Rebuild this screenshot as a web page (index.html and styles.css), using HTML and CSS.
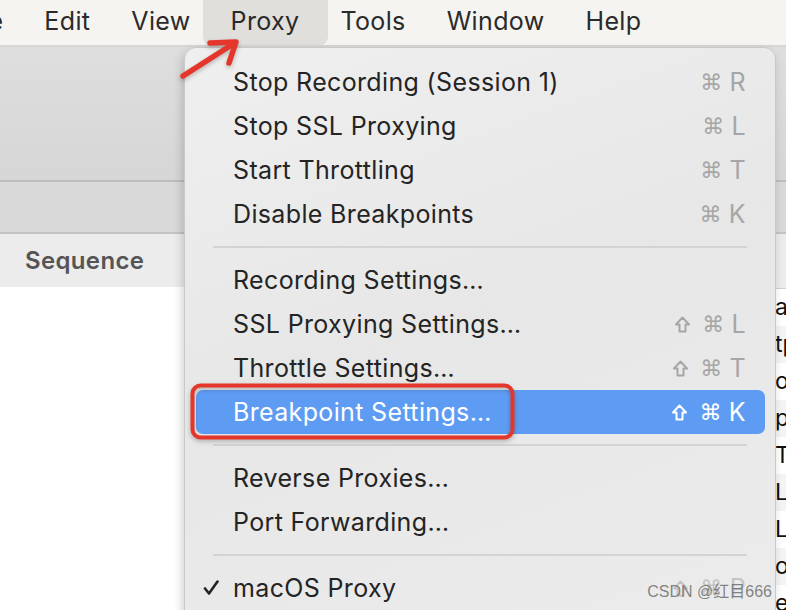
FILE: index.html
```html
<!DOCTYPE html>
<html lang="en">
<head>
  <meta charset="UTF-8" />
  <meta name="viewport" content="width=device-width, initial-scale=1.0"/>
  <title>Proxy Menu</title>
  <link rel="stylesheet" href="styles.css">
</head>
<body>
  <div class="screen">
    <nav class="menubar">
      <span class="menu-title">File</span>
      <span class="menu-title">Edit</span>
      <span class="menu-title">View</span>
      <span class="menu-title active">Proxy</span>
      <span class="menu-title">Tools</span>
      <span class="menu-title">Window</span>
      <span class="menu-title">Help</span>
    </nav>

    <div class="window">
      <div class="toolbar"></div>
      <div class="tabbar"></div>
      <div class="content">
        <div class="seq-pane">
          <div class="pane-header">Sequence</div>
        </div>
        <div class="detail-pane">
          <div class="detail-header"></div>
          <div class="detail-row">al</div>
          <div class="detail-row">tp</div>
          <div class="detail-row">or</div>
          <div class="detail-row">pc</div>
          <div class="detail-row">T</div>
          <div class="detail-row">LS</div>
          <div class="detail-row">LS</div>
          <div class="detail-row">o</div>
          <div class="detail-row">e</div>
        </div>
      </div>
    </div>

    <div class="dropdown">
      <div class="item"><span class="check"></span><span class="label">Stop Recording (Session 1)</span><span class="keys"><span class="cmd">⌘</span>R</span></div>
      <div class="item"><span class="check"></span><span class="label">Stop SSL Proxying</span><span class="keys"><span class="cmd">⌘</span>L</span></div>
      <div class="item"><span class="check"></span><span class="label">Start Throttling</span><span class="keys"><span class="cmd">⌘</span>T</span></div>
      <div class="item"><span class="check"></span><span class="label">Disable Breakpoints</span><span class="keys"><span class="cmd">⌘</span>K</span></div>
      <div class="separator"></div>
      <div class="item"><span class="check"></span><span class="label">Recording Settings…</span></div>
      <div class="item"><span class="check"></span><span class="label">SSL Proxying Settings…</span><span class="keys"><svg class="shift" width="15" height="17" viewBox="0 0 15 17"><path d="M7.5 1.5 L14 8.5 H10.5 V15.5 H4.5 V8.5 H1 Z" fill="none" stroke="currentColor" stroke-width="2" stroke-linejoin="round"/></svg><span class="cmd">⌘</span>L</span></div>
      <div class="item"><span class="check"></span><span class="label">Throttle Settings…</span><span class="keys"><svg class="shift" width="15" height="17" viewBox="0 0 15 17"><path d="M7.5 1.5 L14 8.5 H10.5 V15.5 H4.5 V8.5 H1 Z" fill="none" stroke="currentColor" stroke-width="2" stroke-linejoin="round"/></svg><span class="cmd">⌘</span>T</span></div>
      <div class="item selected"><span class="check"></span><span class="label">Breakpoint Settings…</span><span class="keys"><svg class="shift" width="15" height="17" viewBox="0 0 15 17"><path d="M7.5 1.5 L14 8.5 H10.5 V15.5 H4.5 V8.5 H1 Z" fill="none" stroke="currentColor" stroke-width="2" stroke-linejoin="round"/></svg><span class="cmd">⌘</span>K</span></div>
      <div class="separator"></div>
      <div class="item"><span class="check"></span><span class="label">Reverse Proxies…</span></div>
      <div class="item"><span class="check"></span><span class="label">Port Forwarding…</span></div>
      <div class="separator"></div>
      <div class="item"><span class="check"><svg width="16" height="16" viewBox="0 0 16 16"><path d="M2 8.5 L6 13.5 L14.5 1.5" fill="none" stroke="currentColor" stroke-width="2.6" stroke-linecap="round" stroke-linejoin="round"/></svg></span><span class="label">macOS Proxy</span><span class="keys faded"><svg class="shift" width="15" height="17" viewBox="0 0 15 17"><path d="M7.5 1.5 L14 8.5 H10.5 V15.5 H4.5 V8.5 H1 Z" fill="none" stroke="currentColor" stroke-width="2" stroke-linejoin="round"/></svg><span class="cmd">⌘</span>P</span></div>
    </div>

    <svg class="annotations" width="786" height="610" viewBox="0 0 786 610">
      <g fill="none" stroke="#e5362b" stroke-linecap="round" stroke-linejoin="round">
        <path d="M183 76 L233 44" stroke-width="5.5"/>
        <path d="M210 43 L236 42 L229 63" stroke-width="5.5"/>
        <rect x="192.5" y="385.5" width="320" height="52" rx="8" stroke-width="4"/>
      </g>
    </svg>

    <div class="watermark">CSDN @红目666</div>
  </div>
</body>
</html>
```

FILE: styles.css
```css
body {
  margin: 0;
  font-family: Inter, "Noto Sans", "DejaVu Sans", sans-serif;
  letter-spacing: 0.35px;
  background: #fff;
}
.screen {
  position: relative;
  width: 786px;
  height: 610px;
  overflow: hidden;
}

/* menu bar */
.menubar {
  display: flex;
  height: 45px;
  margin-left: -60px;
  background: #f6f4f1;
  border-bottom: 2px solid #d8d6d3;
  font-size: 25px;
  color: #2a2a2a;
}
.menu-title {
  padding: 0 20.5px;
  line-height: 42px;
  white-space: nowrap;
}
.menu-title.active {
  padding: 0 29px 0 28px;
  margin: 0 -8.5px;
  background: #e1dfdc;
  border-radius: 0 0 8px 8px;
}

/* app window behind the menu */
.window {
  display: flex;
  flex-direction: column;
}
.toolbar {
  height: 133px;
  background: linear-gradient(#dedede, #d6d6d6);
  border-bottom: 2px solid #bdbdbd;
}
.tabbar {
  height: 50px;
  background: #d9d9d9;
  border-bottom: 2px solid #c4c4c4;
}
.content {
  display: flex;
}
.seq-pane {
  width: 740px;
  flex-shrink: 0;
}
.pane-header {
  height: 53px;
  padding-left: 25px;
  line-height: 53px;
  background: #ececec;
  font-size: 24px;
  font-weight: 600;
  color: #555;
}
.detail-pane {
  flex: 1;
}
.detail-header {
  height: 54px;
  background: #ebebeb;
  border-bottom: 1px solid #d0d0d0;
}
.detail-row {
  height: 37px;
  line-height: 37px;
  padding-left: 35px;
  font-size: 23px;
  letter-spacing: 0;
  color: #111;
  white-space: nowrap;
}
.detail-row:nth-child(odd) {
  background: #f4f4f4;
}

/* dropdown */
.dropdown {
  position: absolute;
  left: 184px;
  top: 47px;
  width: 592px;
  height: 600px;
  box-sizing: border-box;
  padding-top: 12px;
  background: linear-gradient(160deg, #efefef, #e7e7e7 45%, #ececec);
  border: 1px solid #c9c9c9;
  border-radius: 12px;
  box-shadow: -2px 4px 10px rgba(0, 0, 0, 0.18);
  font-size: 25px;
  color: #242424;
}
.item {
  display: flex;
  align-items: center;
  height: 44px;
  margin: 0 10px 0 11px;
  padding: 0 19px 0 7px;
  border-radius: 7px;
  white-space: nowrap;
}
.check {
  display: flex;
  align-items: center;
  width: 30px;
  flex-shrink: 0;
}
.keys {
  margin-left: auto;
  display: flex;
  align-items: center;
  color: #a6a6a6;
}
.keys.faded {
  color: #c4c4c4;
}
.cmd {
  font-family: "DejaVu Sans", sans-serif;
  font-size: 22px;
  margin-right: 7px;
}
.shift {
  margin-right: 12px;
}
.item.selected {
  background: #5e9cf3;
  color: #fff;
}
.item.selected .keys {
  color: #fff;
}
.separator {
  height: 2px;
  margin: 10px 28px 10px 28px;
  background: #d3d3d3;
}

/* screenshot annotations */
.annotations {
  position: absolute;
  left: 0;
  top: 0;
  filter: drop-shadow(0 2px 2px rgba(0, 0, 0, 0.25));
}
.watermark {
  position: absolute;
  right: 14px;
  bottom: 8px;
  font-family: "Liberation Sans", "Noto Sans CJK SC", sans-serif;
  font-size: 16px;
  letter-spacing: 0;
  color: rgba(110, 110, 110, 0.85);
}
```
